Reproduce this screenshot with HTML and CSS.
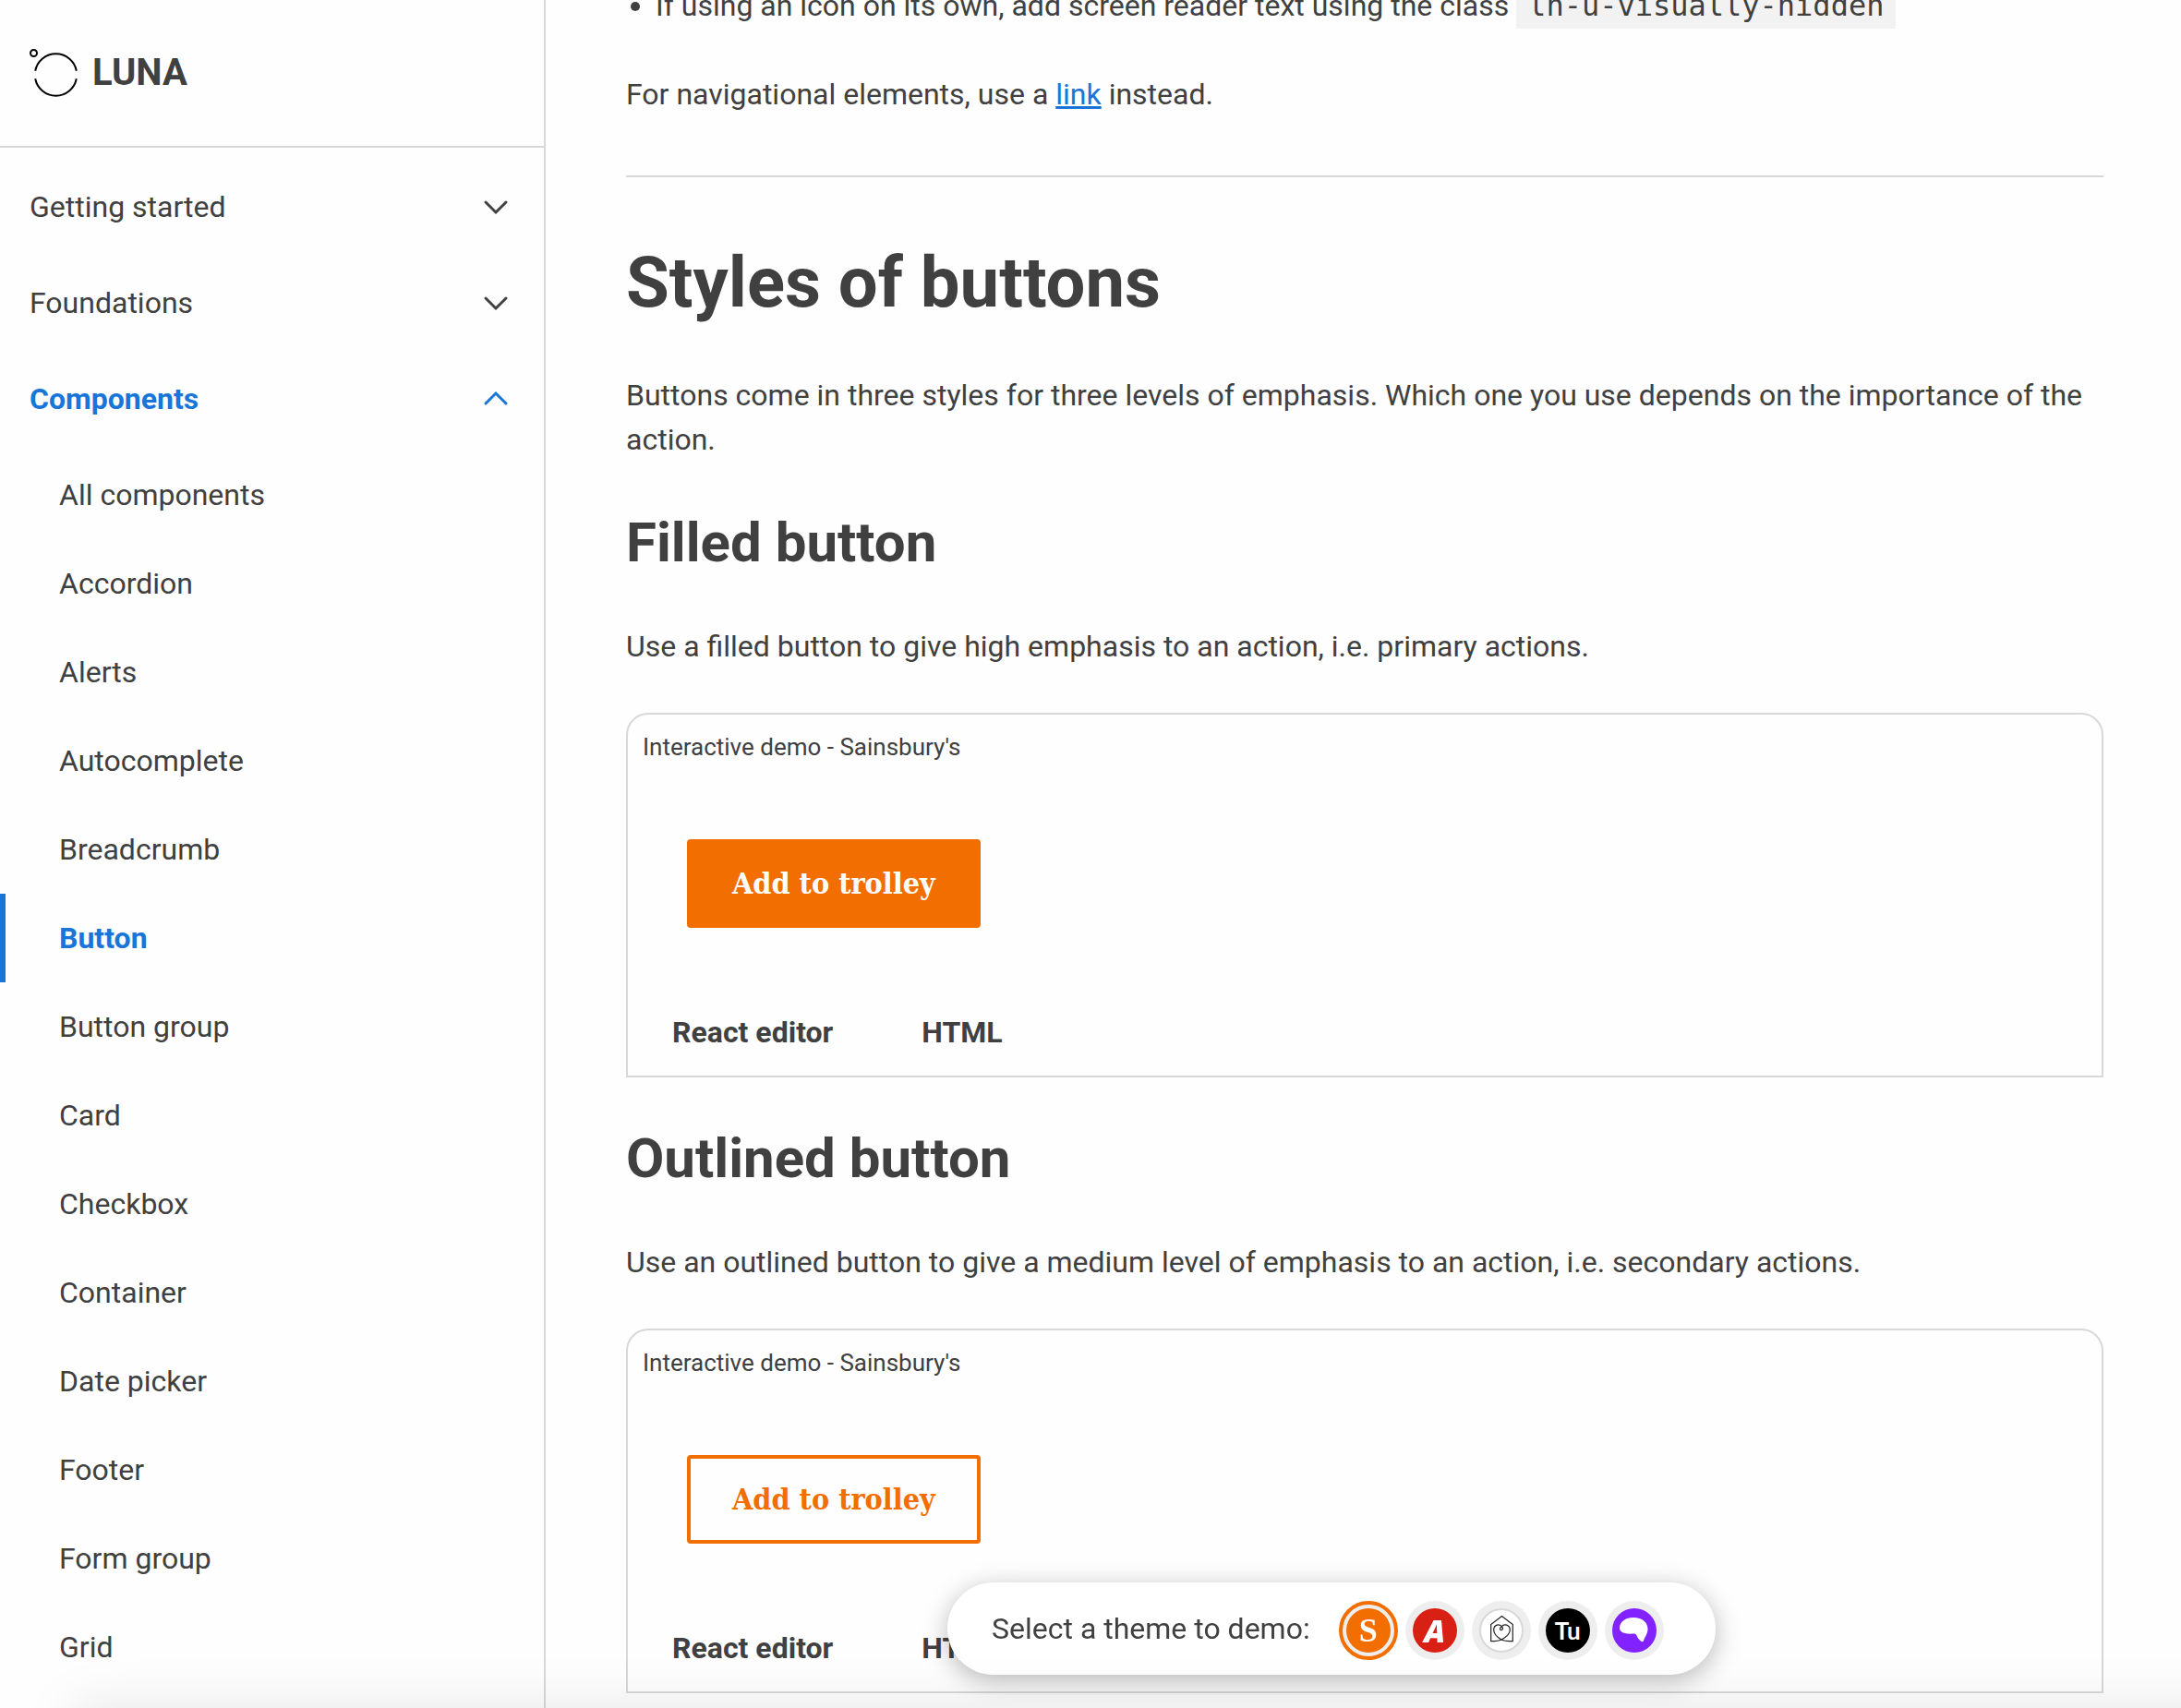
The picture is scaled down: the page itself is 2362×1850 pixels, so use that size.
FILE: index.html
```html
<!DOCTYPE html>
<html lang="en">
<head>
  <meta charset="UTF-8" />
  <meta name="viewport" content="width=device-width, initial-scale=1.0"/>
  <title>Button - Luna</title>
  <link rel="stylesheet" href="styles.css">
</head>
<body>

  <div class="layout">

    <!-- Sidebar -->
    <aside class="sidebar">
      <a class="brand" href="#">
        <svg class="brand-logo" viewBox="0 0 52 52" aria-hidden="true">
          <circle cx="4.500" cy="4.500" r="3.500"/>
          <path d="M6.200 23.800A22.700 22.700 0 0 1 50.800 23.800"/>
          <path d="M6.200 32.200A22.700 22.700 0 0 0 50.800 32.200"/>
        </svg>
        <span>LUNA</span>
      </a>

      <nav class="nav">
        <button class="nav-group" type="button">Getting started
          <svg class="chevron" viewBox="0 0 28 16" aria-hidden="true"><path d="M3 3l11 11 11-11"/></svg>
        </button>
        <button class="nav-group" type="button">Foundations
          <svg class="chevron" viewBox="0 0 28 16" aria-hidden="true"><path d="M3 3l11 11 11-11"/></svg>
        </button>
        <button class="nav-group nav-open" type="button" aria-expanded="true">Components
          <svg class="chevron" viewBox="0 0 28 16" aria-hidden="true"><path d="M3 13l11-11 11 11"/></svg>
        </button>
        <ul class="nav-list">
          <li><a href="#">All components</a></li>
          <li><a href="#">Accordion</a></li>
          <li><a href="#">Alerts</a></li>
          <li><a href="#">Autocomplete</a></li>
          <li><a href="#">Breadcrumb</a></li>
          <li><a class="nav-current" href="#">Button</a></li>
          <li><a href="#">Button group</a></li>
          <li><a href="#">Card</a></li>
          <li><a href="#">Checkbox</a></li>
          <li><a href="#">Container</a></li>
          <li><a href="#">Date picker</a></li>
          <li><a href="#">Footer</a></li>
          <li><a href="#">Form group</a></li>
          <li><a href="#">Grid</a></li>
        </ul>
      </nav>
    </aside>

    <!-- Content -->
    <main class="content">
      <ul class="notes">
        <li>If using an icon on its own, add screen reader text using the class <code>ln-u-visually-hidden</code></li>
      </ul>
      <p>For navigational elements, use a <a class="link" href="#">link</a> instead.</p>

      <hr>

      <h1>Styles of buttons</h1>
      <p>Buttons come in three styles for three levels of emphasis. Which one you use depends on the importance of the action.</p>

      <h2>Filled button</h2>
      <p>Use a filled button to give high emphasis to an action, i.e. primary actions.</p>
      <section class="demo">
        <p class="demo-title">Interactive demo - Sainsbury's</p>
        <div class="demo-stage">
          <button class="btn btn-filled" type="button">Add to trolley</button>
        </div>
        <div class="demo-tabs">
          <button type="button">React editor</button>
          <button type="button">HTML</button>
        </div>
      </section>

      <h2>Outlined button</h2>
      <p>Use an outlined button to give a medium level of emphasis to an action, i.e. secondary actions.</p>
      <section class="demo">
        <p class="demo-title">Interactive demo - Sainsbury's</p>
        <div class="demo-stage">
          <button class="btn btn-outlined" type="button">Add to trolley</button>
        </div>
        <div class="demo-tabs">
          <button type="button">React editor</button>
          <button type="button">HTML</button>
        </div>
      </section>
    </main>

  </div>

  <!-- Theme picker -->
  <div class="themes">
    <span class="themes-label">Select a theme to demo:</span>
    <div class="themes-list">
      <button class="theme theme-active" type="button" aria-label="Sainsbury's">
        <span class="theme-face sainsburys">S</span>
      </button>
      <button class="theme" type="button" aria-label="Argos">
        <span class="theme-face argos">A</span>
      </button>
      <button class="theme" type="button" aria-label="Habitat">
        <span class="theme-face habitat">
          <svg viewBox="0 0 48 48" aria-hidden="true">
            <path d="M24 34C19 31 15.700 27.500 15.700 23.500C15.700 17.500 22 16 25 20.500C26.500 23 23 25 22.500 22.500C22.300 21.200 23.200 20.500 24 20C27 16 33.300 18 33.300 23.500C33.300 27.500 29.500 31 24 34C20.500 35.700 16.500 35.700 12.700 35.700V17.500L24.500 8.500L36.300 17.500V35.700C32 35.700 27.500 35.700 24 34z"/>
          </svg>
        </span>
      </button>
      <button class="theme" type="button" aria-label="Tu">
        <span class="theme-face tu">Tu</span>
      </button>
      <button class="theme" type="button" aria-label="Nectar">
        <span class="theme-face nectar">
          <svg viewBox="0 0 48 48" aria-hidden="true">
            <path d="M8 21.500C8 14.500 14.500 10 23 10c9.500 0 15.500 5 15.500 12.500 0 5-3 8.500-4.500 12.500-.6 1.500-1.800 1.500-3 .5-2.500-2-3.800-4-4.500-6-.6-1.600-2-2-4.500-1.900-8 .4-14-1.300-14-6.100z"/>
          </svg>
        </span>
      </button>
    </div>
  </div>

  <div class="bottom-shadow"></div>

</body>
</html>
```
FILE: styles.css
```css
* {
  box-sizing: border-box;
}

body {
  margin: 0;
  font-family: Roboto, "Liberation Sans", sans-serif;
  font-size: 32px;
  line-height: 48px;
  color: #404040;
  background: #fefefe;
  overflow: hidden;
}

button {
  padding: 0;
  border: 0;
  background: none;
  font: inherit;
  color: inherit;
  cursor: pointer;
}

a {
  color: inherit;
  text-decoration: none;
}

.layout {
  display: flex;
  height: 100vh;
}

/* Sidebar */
.sidebar {
  flex: none;
  width: 591px;
  border-right: 2px solid #d8d8d8;
  overflow: hidden;
}

.brand {
  display: flex;
  align-items: center;
  gap: 16px;
  height: 160px;
  padding: 0 32px;
  border-bottom: 2px solid #d8d8d8;
  font-size: 40px;
  font-weight: 700;
}

.brand-logo {
  width: 52px;
  height: 52px;
  fill: none;
  stroke: #000;
  stroke-width: 2;
}

.nav {
  display: flex;
  flex-direction: column;
  gap: 8px;
  padding-top: 16px;
}

.nav-group {
  display: flex;
  align-items: center;
  justify-content: space-between;
  height: 96px;
  padding: 0 38px 0 32px;
}

.nav-open {
  color: #1976d8;
  font-weight: 700;
}

.chevron {
  width: 28px;
  height: 16px;
  fill: none;
  stroke: currentColor;
  stroke-width: 3;
  stroke-linecap: round;
  overflow: visible;
}

.nav-list {
  margin: 0;
  padding: 0;
  list-style: none;
}

.nav-list a {
  display: block;
  padding: 24px 64px;
}

.nav-list .nav-current {
  padding-left: 58px;
  border-left: 6px solid #1976d8;
  color: #1976d8;
  font-weight: 700;
}

/* Content */
.content {
  flex: 1;
  min-width: 0;
  margin-top: -18px;
  padding: 0 84px 0 87px;
}

.content p {
  margin: 0 0 48px;
}

.notes {
  margin: 0 0 48px;
  padding-left: 32px;
}

code {
  padding: 6px 13px;
  background: #f2f2f2;
  font-family: "DejaVu Sans Mono", monospace;
}

.link {
  color: #1976d8;
  text-decoration: underline 3px;
}

hr {
  height: 2px;
  margin: 64px 0;
  border: 0;
  background: #d8d8d8;
}

h1 {
  margin: 0 0 48px;
  font-size: 76px;
  line-height: 100px;
}

h2 {
  margin: 0 0 48px;
  font-size: 60px;
  line-height: 80px;
}

.demo {
  margin-bottom: 48px;
  border: 2px solid #d8d8d8;
  border-radius: 24px 24px 0 0;
}

.content .demo-title {
  margin: 0;
  padding: 15px 16px;
  font-size: 26px;
  line-height: 40px;
}

.demo-stage {
  padding: 65px 64px 66px;
}

.btn {
  display: block;
  height: 96px;
  padding: 0 45px;
  border: 4px solid #f26e00;
  border-radius: 4px;
  font-family: "DejaVu Serif Condensed", "DejaVu Serif", serif;
  font-size: 32px;
  font-weight: 700;
}

.btn-filled {
  background: #f26e00;
  color: #fff;
}

.btn-outlined {
  color: #f26e00;
}

.demo-tabs {
  display: flex;
  font-weight: 700;
}

.demo-tabs button {
  height: 94px;
  padding: 0 48px;
}

/* Theme picker */
.themes {
  position: fixed;
  bottom: 36px;
  left: 1026px;
  display: flex;
  align-items: center;
  gap: 31px;
  height: 100px;
  padding: 0 56px 0 48px;
  border-radius: 50px;
  background: #fff;
  box-shadow: 0 6px 28px rgba(0, 0, 0, 0.28);
}

.themes-list {
  display: flex;
  gap: 8px;
  padding-top: 4px;
}

.theme {
  width: 64px;
  height: 64px;
  padding: 8px;
  border-radius: 50%;
  background: #eee;
}

.theme-active {
  padding: 4px;
  border: 4px solid #f26e00;
}

.theme-face {
  display: flex;
  align-items: center;
  justify-content: center;
  width: 48px;
  height: 48px;
  border-radius: 50%;
  color: #fff;
}

.theme-face svg {
  flex: none;
  width: 48px;
  height: 48px;
}

.sainsburys {
  background: #f26e00;
  font-family: "Liberation Serif", serif;
  font-size: 36px;
  font-weight: 700;
}

.argos {
  background: #d82014;
  font-family: "Open Sans", sans-serif;
  font-size: 34px;
  font-style: italic;
  font-weight: 800;
}

.habitat {
  background: #fff;
  border: 2px solid #d8d8d8;
}

.habitat svg {
  fill: none;
  stroke: #222;
  stroke-width: 1.200;
}

.tu {
  background: #000;
  font-family: Lato, sans-serif;
  font-size: 26px;
  font-weight: 700;
}

.nectar {
  background: #8223ff;
}

.nectar svg {
  fill: #fff;
}

/* Shadow cast by the bar below the window */
.bottom-shadow {
  position: fixed;
  right: -80px;
  bottom: -80px;
  left: 80px;
  height: 80px;
  box-shadow: 0 0 60px rgba(0, 0, 0, 0.1);
}
```
